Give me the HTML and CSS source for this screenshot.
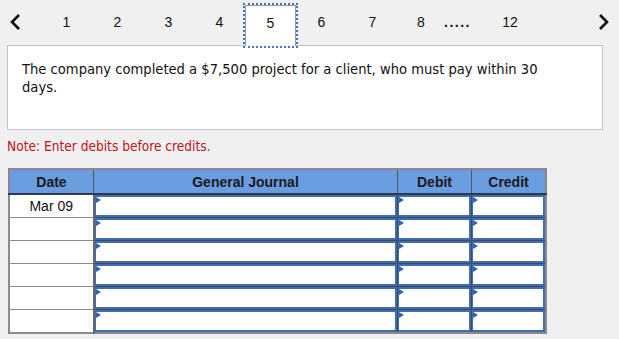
FILE: index.html
```html
<!DOCTYPE html>
<html lang="en">

<head>
  <meta charset="UTF-8" />
  <meta name="viewport" content="width=device-width, initial-scale=1.0" />
  <title>Journal entry</title>
  <link rel="stylesheet" href="styles.css">
</head>

<body>
  <div class="wrap">
    <!-- 题目分页 -->
    <div class="pager">
      <span class="arrow prev">
        <svg width="14" height="18" viewBox="0 0 14 18"><polyline points="10,2 3,9 10,16" fill="none" stroke="#111" stroke-width="2.6" /></svg>
      </span>
      <span class="page">1</span>
      <span class="page">2</span>
      <span class="page">3</span>
      <span class="page">4</span>
      <span class="page current">5</span>
      <span class="page">6</span>
      <span class="page">7</span>
      <span class="page eight">8</span>
      <span class="dots">.....</span>
      <span class="page last">12</span>
      <span class="arrow next">
        <svg width="14" height="18" viewBox="0 0 14 18"><polyline points="4,2 11,9 4,16" fill="none" stroke="#111" stroke-width="2.6" /></svg>
      </span>
    </div>

    <!-- 题目 -->
    <div class="question">
      The company completed a $7,500 project for a client, who must pay within 30 days.
    </div>
    <p class="note">Note: Enter debits before credits.</p>

    <!-- 分录表 -->
    <table class="journal">
      <thead>
        <tr>
          <th class="c_date">Date</th>
          <th class="c_acct">General Journal</th>
          <th class="c_num">Debit</th>
          <th class="c_num">Credit</th>
        </tr>
      </thead>
      <tbody>
        <tr>
          <td class="date">Mar 09</td>
          <td class="cell"><div class="field"></div></td>
          <td class="cell"><div class="field"></div></td>
          <td class="cell"><div class="field"></div></td>
        </tr>
        <tr>
          <td class="date"></td>
          <td class="cell"><div class="field"></div></td>
          <td class="cell"><div class="field"></div></td>
          <td class="cell"><div class="field"></div></td>
        </tr>
        <tr>
          <td class="date"></td>
          <td class="cell"><div class="field"></div></td>
          <td class="cell"><div class="field"></div></td>
          <td class="cell"><div class="field"></div></td>
        </tr>
        <tr>
          <td class="date"></td>
          <td class="cell"><div class="field"></div></td>
          <td class="cell"><div class="field"></div></td>
          <td class="cell"><div class="field"></div></td>
        </tr>
        <tr>
          <td class="date"></td>
          <td class="cell"><div class="field"></div></td>
          <td class="cell"><div class="field"></div></td>
          <td class="cell"><div class="field"></div></td>
        </tr>
        <tr>
          <td class="date"></td>
          <td class="cell"><div class="field"></div></td>
          <td class="cell"><div class="field"></div></td>
          <td class="cell"><div class="field"></div></td>
        </tr>
      </tbody>
    </table>
  </div>
</body>

</html>
```

FILE: styles.css
```css
body,
p {
  margin: 0px;
  padding: 0px;
}

body {
  background-color: #f0f0f0;
  font-family: "Liberation Sans", Arial, sans-serif;
  color: #111;
}

.wrap {
  width: 619px;
  height: 339px;
  overflow: hidden;
}

/* 分页 */
.pager {
  height: 45px;
  display: flex;
  align-items: flex-start;
  font-size: 14px;
}

.arrow {
  display: flex;
  align-items: center;
  justify-content: center;
  height: 18px;
  margin-top: 13px;
}

.prev {
  width: 14px;
  margin-left: 9px;
  margin-right: 18px;
}

.next {
  width: 14px;
  margin-left: auto;
  margin-right: 9px;
}

.page {
  width: 51px;
  box-sizing: border-box;
  text-align: center;
  line-height: 16px;
  padding-top: 14px;
}

.page.current {
  margin-top: 5px;
  height: 41px;
  padding-top: 9px;
  background-color: #fff;
  border: 1px solid #999;
  border-bottom: 0;
  outline: 2px dotted #3b74c9;
}

.page.eight {
  width: 46px;
}

.dots {
  width: 33px;
  padding-top: 14px;
  line-height: 16px;
  letter-spacing: 1.5px;
  font-weight: bold;
}

.page.last {
  width: 30px;
  margin-left: 18px;
}

/* 题目 */
.question {
  margin: 0 16px 0 7px;
  height: 85px;
  box-sizing: border-box;
  padding: 14px 50px 0 14px;
  background-color: #fff;
  border: 1px solid #c4c4c4;
  font-family: "DejaVu Sans Condensed", "DejaVu Sans", sans-serif;
  font-size: 14.6px;
  line-height: 18px;
}

.note {
  margin: 8px 0 0 7px;
  height: 30px;
  color: #c0101c;
  font-family: "DejaVu Sans Condensed", "DejaVu Sans", sans-serif;
  font-size: 13.6px;
  line-height: 16px;
}

/* 分录表 */
.journal {
  margin-left: 8px;
  border-collapse: collapse;
  border: 2px solid #8a8a8a;
  font-size: 14px;
}

.journal th {
  height: 23px;
  padding: 0;
  background-color: #6a9de0;
  color: #1a1a1a;
  font-weight: bold;
  border: 1px solid #555;
  border-bottom: 2px solid #2f3a48;
}

.c_date {
  width: 83px;
}

.c_acct {
  width: 303px;
}

.c_num {
  width: 73px;
}

.journal td {
  height: 22px;
  padding: 0;
}

.journal .date {
  background-color: #fff;
  text-align: center;
  border: 1px solid #8a8a8a;
  border-right: 2px solid #666;
}

.journal .cell {
  border: 1px solid #404a58;
}

.field {
  height: 22px;
  box-sizing: border-box;
  border: 2px solid #3e6db3;
  border-left-width: 1px;
  background-color: #fff;
  position: relative;
}

/* 输入框左上角小三角 */
.field::before {
  content: "";
  position: absolute;
  left: 0;
  top: 0;
  border-top: 3px solid transparent;
  border-bottom: 3px solid transparent;
  border-left: 5px solid #2f62b8;
}
```
